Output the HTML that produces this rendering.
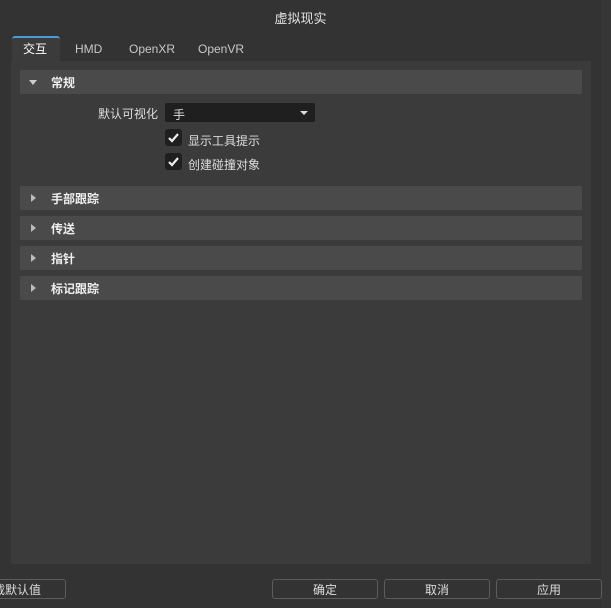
<!DOCTYPE html>
<html><head><meta charset="utf-8"><style>
*{margin:0;padding:0;box-sizing:border-box}
body{width:611px;height:608px;background:#333;font-family:"Liberation Sans","Noto Sans CJK SC",sans-serif;font-size:12px;color:#ddd;position:relative;overflow:hidden}
.a{position:absolute}
.title{left:0;width:601px;top:8px;text-align:center;font-size:13px;color:#e0e0e0}
.rstrip{left:601px;top:0;width:10px;height:608px;background:#363636}
.tab{top:37px;height:25px;line-height:25px;font-size:12px;color:#c8c8c8}
.panel{left:11px;top:61px;width:580px;height:503px;background:#3b3b3b}
.hdr{left:20px;width:562px;height:24px;background:#4a4a4a;font-weight:bold;color:#eee;line-height:26px;font-size:12px}
.hdr span{position:absolute;left:31px}
.tri{position:absolute;left:11px;top:8px;width:0;height:0;border-top:4px solid transparent;border-bottom:4px solid transparent;border-left:5px solid #bbb}
.down{position:absolute;left:9px;top:10px;border-left:4px solid transparent;border-right:4px solid transparent;border-top:5px solid #ccc}
.cb{width:17px;height:17px;background:#1f1f1f;border-radius:3px}
.btn{top:579px;height:20px;border:1px solid #5c5c5c;border-radius:3px;text-align:center;line-height:20px;color:#ddd;font-size:12px}
</style></head><body>
<div class="a rstrip"></div>
<div class="a title">虚拟现实</div>
<div class="a" style="left:12px;top:36px;width:48px;height:25px;background:#3b3b3b;border-top:2px solid #4a9bd6;border-radius:3px 3px 0 0"></div>
<div class="a tab" style="left:23px;color:#fff">交互</div>
<div class="a tab" style="left:75px">HMD</div>
<div class="a tab" style="left:129px">OpenXR</div>
<div class="a tab" style="left:198px">OpenVR</div>
<div class="a panel"></div>
<div class="a hdr" style="top:70px"><i class="down"></i><span>常规</span></div>
<div class="a" style="left:98px;top:106px;line-height:16px">默认可视化</div>
<div class="a" style="left:165px;top:103px;width:150px;height:19px;background:#1f1f1f;border-radius:2px"><span class="a" style="left:8px;top:3px">手</span><i class="a" style="left:135px;top:8px;border-left:4px solid transparent;border-right:4px solid transparent;border-top:4px solid #ddd"></i></div>
<div class="a cb" style="left:165px;top:129px"><svg width="17" height="17"><path d="M4 9l3 3 6-7" stroke="#eee" stroke-width="2.2" fill="none"/></svg></div>
<div class="a" style="left:188px;top:132px">显示工具提示</div>
<div class="a cb" style="left:165px;top:153px"><svg width="17" height="17"><path d="M4 9l3 3 6-7" stroke="#eee" stroke-width="2.2" fill="none"/></svg></div>
<div class="a" style="left:188px;top:156px">创建碰撞对象</div>
<div class="a hdr" style="top:186px"><i class="tri"></i><span>手部跟踪</span></div>
<div class="a hdr" style="top:216px"><i class="tri"></i><span>传送</span></div>
<div class="a hdr" style="top:246px"><i class="tri"></i><span>指针</span></div>
<div class="a hdr" style="top:276px"><i class="tri"></i><span>标记跟踪</span></div>
<div class="a btn" style="left:-60px;width:126px;text-align:right;padding-right:24px">加载默认值</div>
<div class="a btn" style="left:272px;width:106px">确定</div>
<div class="a btn" style="left:384px;width:106px">取消</div>
<div class="a btn" style="left:496px;width:106px">应用</div>
</body></html>
